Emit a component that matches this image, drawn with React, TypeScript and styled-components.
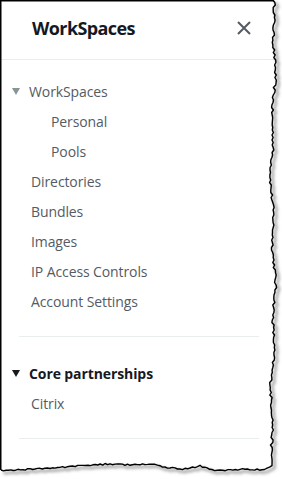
import React from "react";
import styled, { createGlobalStyle } from "styled-components";

const Global = createGlobalStyle`
  html, body { margin: 0; padding: 0; background: #ffffff; }
  body { font-family: "Open Sans", "Noto Sans", Arial, sans-serif; }
  * { box-sizing: border-box; }
`;

const Page = styled.div`
  position: relative;
  width: 282px;
  height: 479px;
  overflow: hidden;
  background: #ffffff;
`;

const Panel = styled.div`
  width: 276px;
  display: flex;
  flex-direction: column;
`;

const Header = styled.header`
  height: 60px;
  display: flex;
  align-items: center;
  justify-content: space-between;
  padding: 0 24px 3px 32px;
  border-bottom: 1px solid #eaeded;
`;

const Title = styled.h2`
  margin: 0;
  font-size: 18px;
  font-weight: 700;
  color: #16191f;
  letter-spacing: -0.6px;
`;

const CloseButton = styled.button`
  border: 0;
  background: none;
  padding: 0;
  width: 16px;
  height: 16px;
  display: flex;
  align-items: center;
  justify-content: center;
  color: #545b64;
`;

const Nav = styled.nav`
  display: flex;
  flex-direction: column;
  padding-top: 16px;
`;

const Item = styled.div<{ $level?: number; $bold?: boolean }>`
  height: 30px;
  display: flex;
  align-items: center;
  gap: 9px;
  padding-left: ${(p) => (p.$level === 2 ? 51 : p.$level === 0 ? 12 : 31)}px;
  font-size: 14px;
  font-weight: ${(p) => (p.$bold ? 700 : 400)};
  color: ${(p) => (p.$bold ? "#16191f" : "#545b64")};
  letter-spacing: -0.1px;
`;

const Caret = styled.span<{ $dark?: boolean }>`
  width: 0;
  height: 0;
  border-left: 4.5px solid transparent;
  border-right: 4.5px solid transparent;
  border-top: 7px solid ${(p) => (p.$dark ? "#16191f" : "#879596")};
  margin-top: 1px;
`;

const Divider = styled.hr`
  margin: 20px 17px 21px 19px;
  border: 0;
  border-top: 1px solid #eaeded;
  width: 240px;
`;

const Frame = styled.svg`
  position: absolute;
  left: 0;
  top: 0;
  pointer-events: none;
`;

function rng(seed: number) {
  let s = seed;
  return () => {
    s = (s * 16807) % 2147483647;
    return (s - 1) / 2147483646;
  };
}

function buildEdge(): string {
  const r = rng(12345);
  const pts: [number, number][] = [];
  const rightBase = (y: number) =>
    273 + 1.5 * Math.sin(y / 37) + 1 * Math.sin(y / 11 + 1);
  for (let y = 0; y <= 462; y += 2.5) {
    pts.push([rightBase(y) + (r() - 0.5) * 2.4, y]);
  }
  const bottomKeys: [number, number][] = [
    [272, 466],
    [262, 470],
    [245, 469],
    [228, 470],
    [212, 470],
    [200, 466],
    [185, 469],
    [170, 468],
    [150, 464],
    [130, 465],
    [110, 464],
    [88, 465],
    [70, 467],
    [50, 468],
    [35, 469],
    [18, 470],
    [6, 471],
    [1, 470],
  ];
  for (let i = 0; i < bottomKeys.length - 1; i++) {
    const [x1, y1] = bottomKeys[i];
    const [x2, y2] = bottomKeys[i + 1];
    const steps = Math.max(1, Math.round((x1 - x2) / 2.5));
    for (let k = 0; k < steps; k++) {
      const t = k / steps;
      pts.push([x1 + (x2 - x1) * t, y1 + (y2 - y1) * t + (r() - 0.5) * 1.6]);
    }
  }
  pts.push([1, 470]);
  return pts.map((p, i) => `${i === 0 ? "M" : "L"}${p[0].toFixed(1)} ${p[1].toFixed(1)}`).join(" ");
}

const edge = buildEdge();
const shape = `M1 0 L273 0 ${edge.replace(/^M/, "L")} L1 470 Z`;

function TornFrame() {
  return (
    <Frame width={282} height={479} viewBox="0 0 282 479">
      <defs>
        <filter id="sh" x="-10%" y="-10%" width="120%" height="120%">
          <feGaussianBlur stdDeviation="1.6" />
        </filter>
      </defs>
      <path d={`M0 0 H282 V479 H0 Z ${shape}`} fill="#ffffff" fillRule="evenodd" />
      <path d={edge} fill="none" stroke="#555" strokeOpacity={0.55} strokeWidth={2.5} transform="translate(2.5 2.5)" filter="url(#sh)" />
      <path d={edge} fill="none" stroke="#000" strokeWidth={1.4} strokeLinejoin="round" />
      <path d="M0.75 470 V0.75 H274" fill="none" stroke="#000" strokeWidth={1.5} />
    </Frame>
  );
}

const items: { label: string; level?: number }[] = [
  { label: "Personal", level: 2 },
  { label: "Pools", level: 2 },
  { label: "Directories" },
  { label: "Bundles" },
  { label: "Images" },
  { label: "IP Access Controls" },
  { label: "Account Settings" },
];

export default function App() {
  return (
    <Page>
      <Global />
      <Panel>
        <Header>
          <Title>WorkSpaces</Title>
          <CloseButton aria-label="Close">
            <svg width="14" height="14" viewBox="0 0 14 14">
              <path d="M1 1 L13 13 M13 1 L1 13" stroke="currentColor" strokeWidth="2" />
            </svg>
          </CloseButton>
        </Header>
        <Nav>
          <Item $level={0}>
            <Caret />
            WorkSpaces
          </Item>
          {items.map((it) => (
            <Item key={it.label} $level={it.level}>
              {it.label}
            </Item>
          ))}
          <Divider />
          <Item $level={0} $bold>
            <Caret $dark />
            Core partnerships
          </Item>
          <Item>Citrix</Item>
          <Divider />
        </Nav>
      </Panel>
      <TornFrame />
    </Page>
  );
}
